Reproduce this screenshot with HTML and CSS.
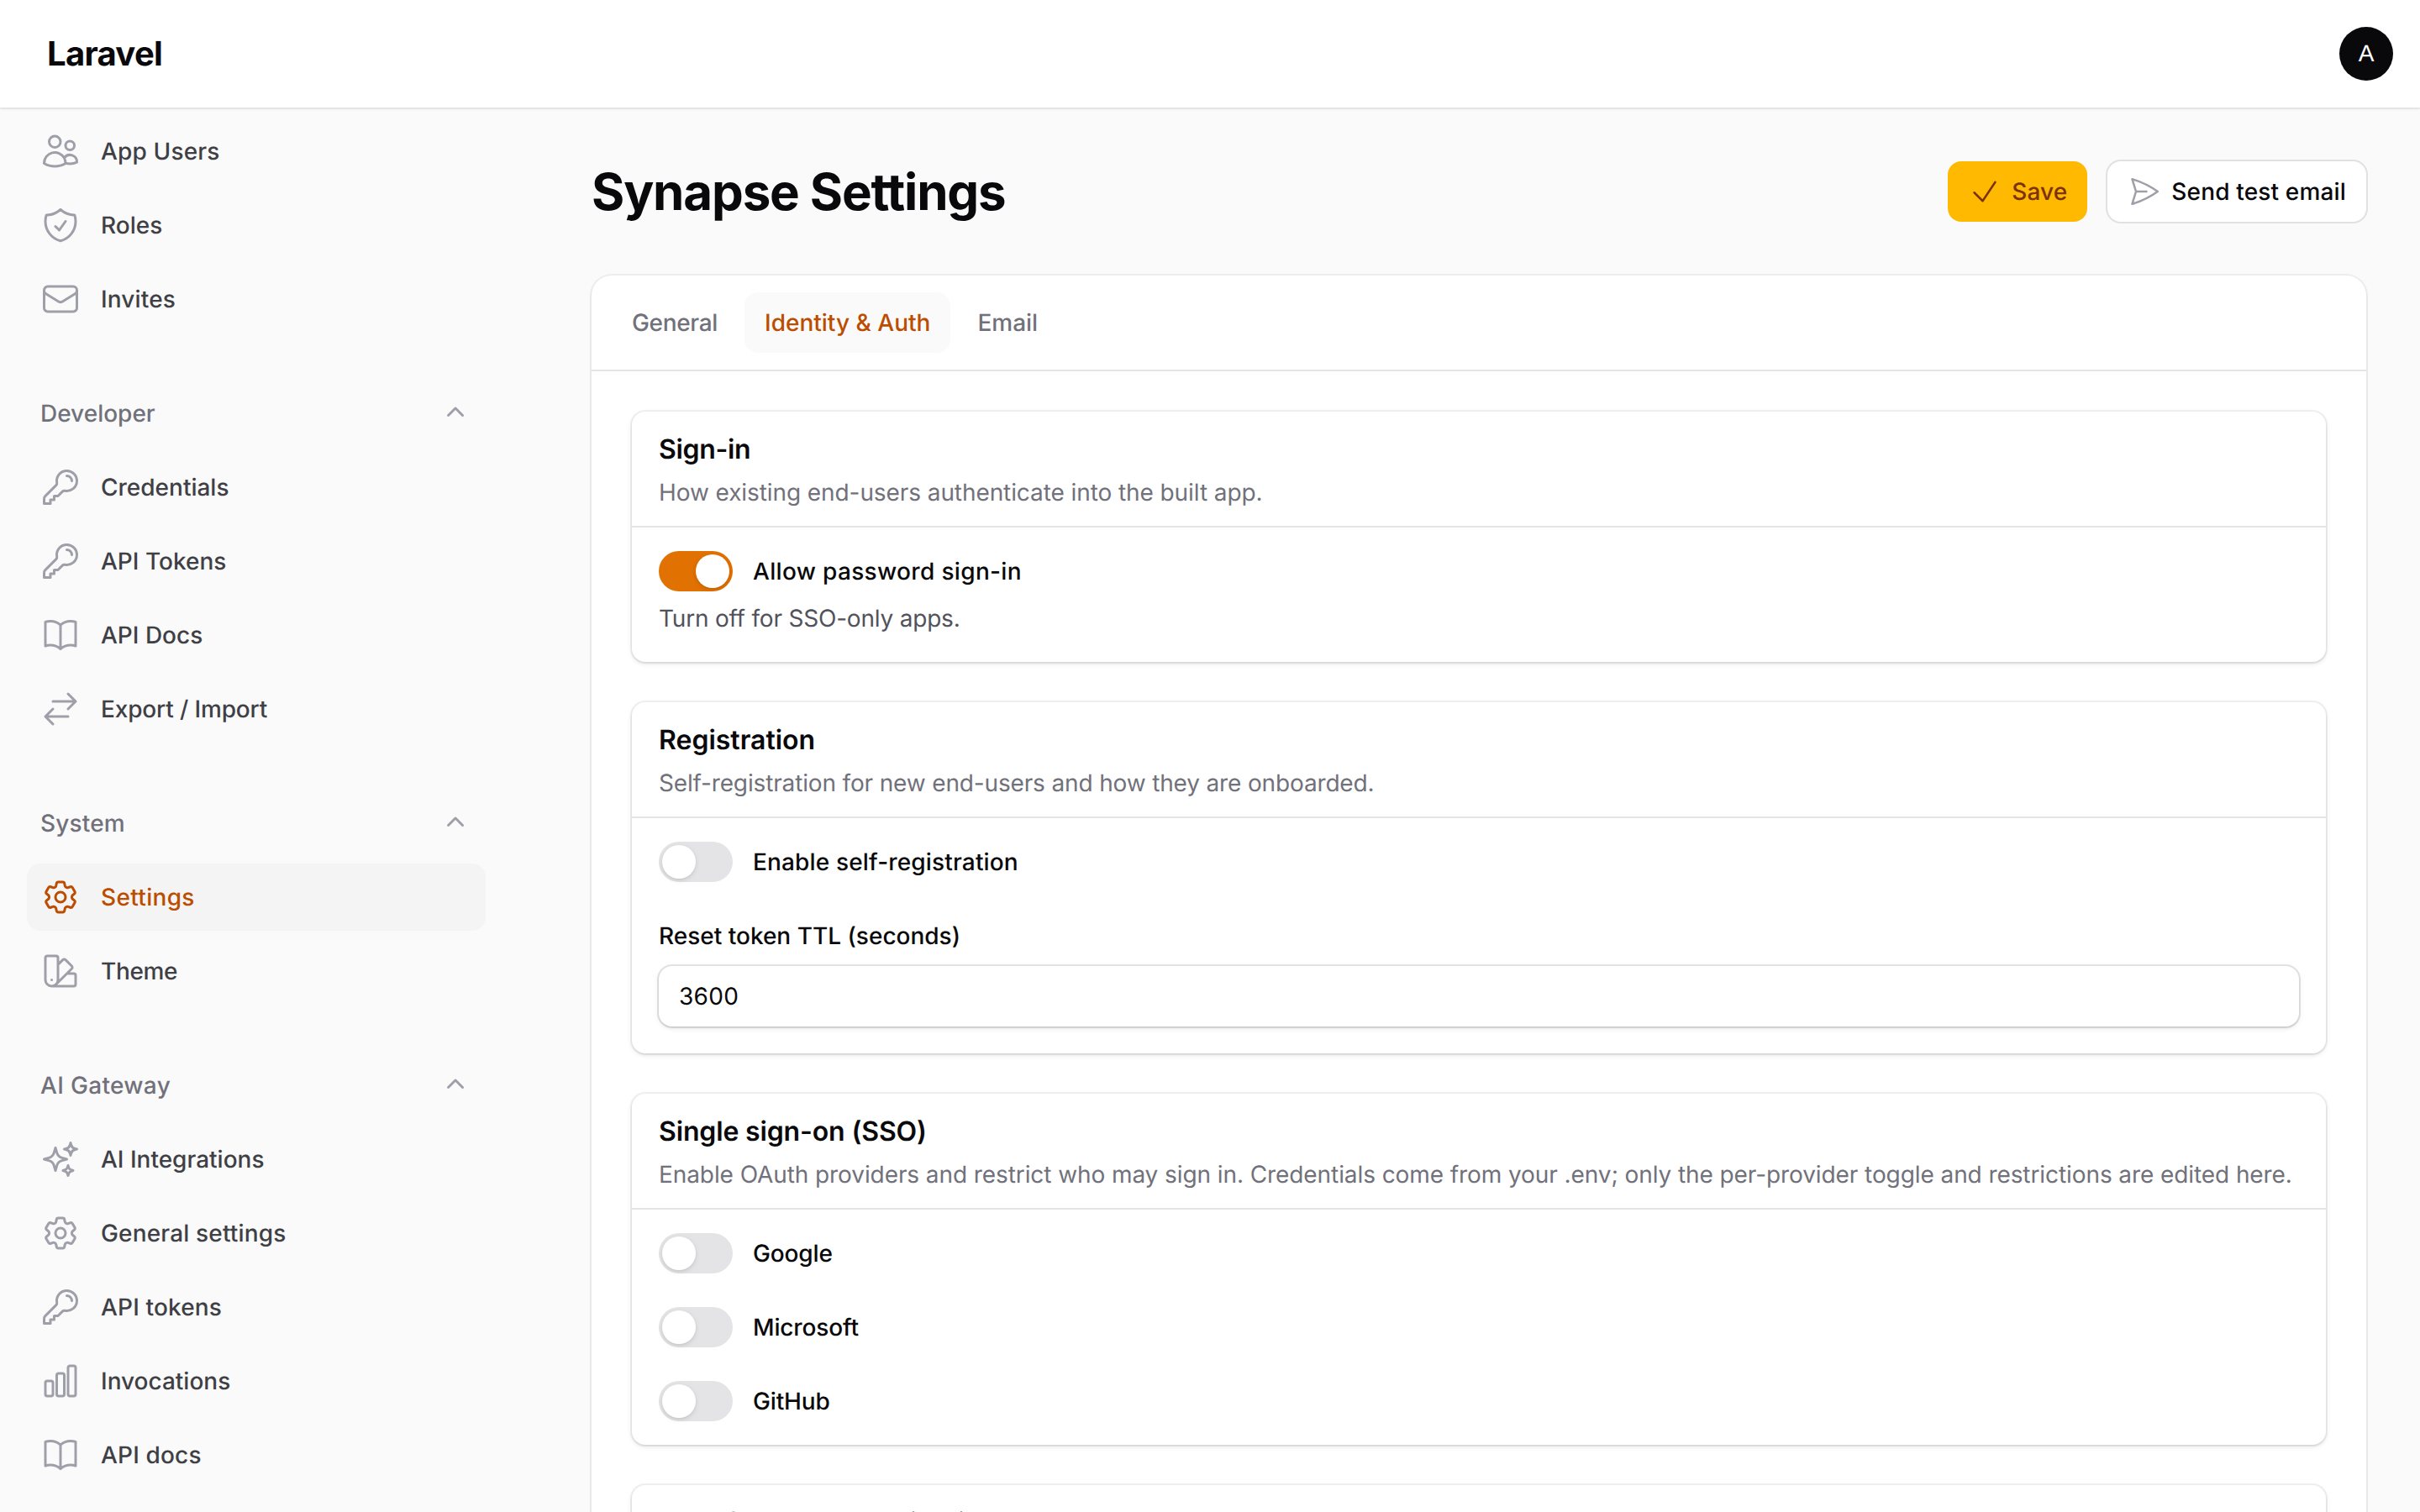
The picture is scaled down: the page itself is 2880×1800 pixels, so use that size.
FILE: index.html
```html
<!DOCTYPE html>
<html lang="en">
<head>
    <meta charset="UTF-8">
    <meta name="viewport" content="width=device-width, initial-scale=1.0">
    <title>Synapse Settings - Laravel</title>
    <link rel="stylesheet" href="styles.css">
</head>
<body>

    <!-- Icons used more than once -->
    <svg class="sprite" xmlns="http://www.w3.org/2000/svg">
        <symbol id="key" viewBox="0 0 24 24">
            <path d="M15.75 5.25a3 3 0 0 1 3 3m3 0a6 6 0 0 1-7.029 5.912c-.563-.097-1.159.026-1.563.43L10.5 17.25H8.25v2.25H6v2.25H2.25v-2.818c0-.597.237-1.17.659-1.591l6.499-6.499c.404-.404.527-1 .43-1.563A6 6 0 1 1 21.75 8.25Z"/>
        </symbol>
        <symbol id="book" viewBox="0 0 24 24">
            <path d="M12 6.042A8.967 8.967 0 0 0 6 3.75c-1.052 0-2.062.18-3 .512v14.25A8.987 8.987 0 0 1 6 18c2.305 0 4.408.867 6 2.292m0-14.25a8.966 8.966 0 0 1 6-2.292c1.052 0 2.062.18 3 .512v14.25A8.987 8.987 0 0 0 18 18a8.967 8.967 0 0 0-6 2.292m0-14.25v14.25"/>
        </symbol>
        <symbol id="cog" viewBox="0 0 24 24">
            <path d="M9.594 3.94c.09-.542.56-.94 1.11-.94h2.593c.55 0 1.02.398 1.11.94l.213 1.281c.063.374.313.686.645.87.074.04.147.083.22.127.325.196.72.257 1.075.124l1.217-.456a1.125 1.125 0 0 1 1.37.49l1.296 2.247a1.125 1.125 0 0 1-.26 1.431l-1.003.827c-.293.241-.438.613-.43.992a7.723 7.723 0 0 1 0 .255c-.008.378.137.75.43.991l1.004.827c.424.35.534.955.26 1.43l-1.298 2.247a1.125 1.125 0 0 1-1.369.491l-1.217-.456c-.355-.133-.75-.072-1.076.124a6.47 6.47 0 0 1-.22.128c-.331.183-.581.495-.644.869l-.213 1.281c-.09.543-.56.94-1.11.94h-2.594c-.55 0-1.019-.398-1.11-.94l-.213-1.281c-.062-.374-.312-.686-.644-.87a6.52 6.52 0 0 1-.22-.127c-.325-.196-.72-.257-1.076-.124l-1.217.456a1.125 1.125 0 0 1-1.369-.49l-1.297-2.247a1.125 1.125 0 0 1 .26-1.431l1.004-.827c.292-.24.437-.613.43-.991a6.932 6.932 0 0 1 0-.255c.007-.38-.138-.751-.43-.992l-1.004-.827a1.125 1.125 0 0 1-.26-1.43l1.297-2.247a1.125 1.125 0 0 1 1.37-.491l1.216.456c.356.133.751.072 1.076-.124.072-.044.146-.086.22-.128.332-.183.582-.495.644-.869l.214-1.28Z"/>
            <path d="M15 12a3 3 0 1 1-6 0 3 3 0 0 1 6 0Z"/>
        </symbol>
        <symbol id="chevron" viewBox="0 0 20 20">
            <path d="M9.47 6.47a.75.75 0 0 1 1.06 0l4.25 4.25a.75.75 0 1 1-1.06 1.06L10 8.06l-3.72 3.72a.75.75 0 0 1-1.06-1.06l4.25-4.25Z"/>
        </symbol>
    </svg>

    <header class="topbar">
        <div class="logo">Laravel</div>
        <div class="avatar">A</div>
    </header>

    <div class="layout">
        <nav class="sidebar">
            <section class="nav-group">
                <a class="nav-item loose-1">
                    <svg class="icon" viewBox="0 0 24 24"><path d="M15 19.128a9.38 9.38 0 0 0 2.625.372 9.337 9.337 0 0 0 4.121-.952 4.125 4.125 0 0 0-7.533-2.493M15 19.128v-.003c0-1.113-.285-2.16-.786-3.07M15 19.128v.106A12.318 12.318 0 0 1 8.624 21c-2.331 0-4.512-.645-6.374-1.766l-.001-.109a6.375 6.375 0 0 1 11.964-3.07M12 6.375a3.375 3.375 0 1 1-6.75 0 3.375 3.375 0 0 1 6.75 0Zm8.25 2.25a2.625 2.625 0 1 1-5.25 0 2.625 2.625 0 0 1 5.25 0Z"/></svg>
                    <span>App Users</span>
                </a>
                <a class="nav-item">
                    <svg class="icon" viewBox="0 0 24 24"><path d="M9 12.75 11.25 15 15 9.75m-3-7.036A11.959 11.959 0 0 1 3.598 6 11.99 11.99 0 0 0 3 9.749c0 5.592 3.824 10.29 9 11.623 5.176-1.332 9-6.03 9-11.622 0-1.31-.21-2.571-.598-3.751h-.152c-3.196 0-6.1-1.248-8.25-3.285Z"/></svg>
                    <span>Roles</span>
                </a>
                <a class="nav-item loose-1">
                    <svg class="icon" viewBox="0 0 24 24"><path d="M21.75 6.75v10.5a2.25 2.25 0 0 1-2.25 2.25h-15a2.25 2.25 0 0 1-2.25-2.25V6.75m19.5 0A2.25 2.25 0 0 0 19.5 4.5h-15a2.25 2.25 0 0 0-2.25 2.25m19.5 0v.243a2.25 2.25 0 0 1-1.07 1.916l-7.5 4.615a2.25 2.25 0 0 1-2.36 0L3.32 8.91a2.25 2.25 0 0 1-1.07-1.916V6.75"/></svg>
                    <span>Invites</span>
                </a>
            </section>

            <section class="nav-group">
                <div class="nav-label">
                    <span>Developer</span>
                    <svg class="chevron"><use href="#chevron"/></svg>
                </div>
                <a class="nav-item">
                    <svg class="icon"><use href="#key"/></svg>
                    <span>Credentials</span>
                </a>
                <a class="nav-item">
                    <svg class="icon"><use href="#key"/></svg>
                    <span>API Tokens</span>
                </a>
                <a class="nav-item">
                    <svg class="icon"><use href="#book"/></svg>
                    <span>API Docs</span>
                </a>
                <a class="nav-item tight-1">
                    <svg class="icon" viewBox="0 0 24 24"><path d="M7.5 21 3 16.5m0 0L7.5 12M3 16.5h13.5m0-13.5L21 7.5m0 0L16.5 12M21 7.5H7.5"/></svg>
                    <span>Export / Import</span>
                </a>
            </section>

            <section class="nav-group">
                <div class="nav-label loose-1">
                    <span>System</span>
                    <svg class="chevron"><use href="#chevron"/></svg>
                </div>
                <a class="nav-item active loose-2">
                    <svg class="icon"><use href="#cog"/></svg>
                    <span>Settings</span>
                </a>
                <a class="nav-item tight-2">
                    <svg class="icon" viewBox="0 0 24 24"><path d="M4.098 19.902a3.75 3.75 0 0 0 5.304 0l6.401-6.402M6.75 21A3.75 3.75 0 0 1 3 17.25V4.125C3 3.504 3.504 3 4.125 3h5.25c.621 0 1.125.504 1.125 1.125v4.072M6.75 21a3.75 3.75 0 0 0 3.75-3.75V8.197M6.75 21h13.125c.621 0 1.125-.504 1.125-1.125v-5.25c0-.621-.504-1.125-1.125-1.125h-4.072M10.5 8.197l2.88-2.88c.438-.439 1.15-.439 1.59 0l3.712 3.713c.44.44.44 1.152 0 1.59l-2.879 2.88M6.75 17.25h.008v.008H6.75v-.008Z"/></svg>
                    <span>Theme</span>
                </a>
            </section>

            <section class="nav-group">
                <div class="nav-label loose-2">
                    <span>AI Gateway</span>
                    <svg class="chevron"><use href="#chevron"/></svg>
                </div>
                <a class="nav-item">
                    <svg class="icon" viewBox="0 0 24 24"><path d="M9.813 15.904 9 18.75l-.813-2.846a4.5 4.5 0 0 0-3.09-3.09L2.25 12l2.846-.813a4.5 4.5 0 0 0 3.09-3.09L9 5.25l.813 2.846a4.5 4.5 0 0 0 3.09 3.09L15.75 12l-2.846.813a4.5 4.5 0 0 0-3.09 3.09ZM18.259 8.715 18 9.75l-.259-1.035a3.375 3.375 0 0 0-2.455-2.456L14.25 6l1.036-.259a3.375 3.375 0 0 0 2.455-2.456L18 2.25l.259 1.035a3.375 3.375 0 0 0 2.456 2.456L21.75 6l-1.035.259a3.375 3.375 0 0 0-2.456 2.456ZM16.894 20.567 16.5 21.75l-.394-1.183a2.25 2.25 0 0 0-1.423-1.423L13.5 18.75l1.183-.394a2.25 2.25 0 0 0 1.423-1.423l.394-1.183.394 1.183a2.25 2.25 0 0 0 1.423 1.423l1.183.394-1.183.394a2.25 2.25 0 0 0-1.423 1.423Z"/></svg>
                    <span>AI Integrations</span>
                </a>
                <a class="nav-item loose-1">
                    <svg class="icon"><use href="#cog"/></svg>
                    <span>General settings</span>
                </a>
                <a class="nav-item loose-1">
                    <svg class="icon"><use href="#key"/></svg>
                    <span>API tokens</span>
                </a>
                <a class="nav-item">
                    <svg class="icon" viewBox="0 0 24 24"><path d="M3 13.125C3 12.504 3.504 12 4.125 12h2.25c.621 0 1.125.504 1.125 1.125v6.75C7.5 20.496 6.996 21 6.375 21h-2.25A1.125 1.125 0 0 1 3 19.875v-6.75ZM9.75 8.625c0-.621.504-1.125 1.125-1.125h2.25c.621 0 1.125.504 1.125 1.125v11.25c0 .621-.504 1.125-1.125 1.125h-2.25a1.125 1.125 0 0 1-1.125-1.125V8.625ZM16.5 4.125c0-.621.504-1.125 1.125-1.125h2.25C20.496 3 21 3.504 21 4.125v15.75c0 .621-.504 1.125-1.125 1.125h-2.25a1.125 1.125 0 0 1-1.125-1.125V4.125Z"/></svg>
                    <span>Invocations</span>
                </a>
                <a class="nav-item loose-1">
                    <svg class="icon"><use href="#book"/></svg>
                    <span>API docs</span>
                </a>
            </section>
        </nav>

        <main class="main">
            <div class="page-header">
                <h1>Synapse Settings</h1>
                <div class="actions">
                    <button class="btn btn-primary loose-1">
                        <svg class="icon" viewBox="0 0 24 24"><path d="m4.5 12.75 6 6 9-13.5"/></svg>
                        Save
                    </button>
                    <button class="btn btn-outline loose-1">
                        <svg class="icon" viewBox="0 0 24 24"><path d="M6 12 3.269 3.125A59.769 59.769 0 0 1 21.485 12 59.768 59.768 0 0 1 3.27 20.875L5.999 12Zm0 0h7.5"/></svg>
                        Send test email
                    </button>
                </div>
            </div>

            <div class="card">
                <div class="tabs">
                    <button class="tab tight-2">General</button>
                    <button class="tab active">Identity &amp; Auth</button>
                    <button class="tab">Email</button>
                </div>

                <div class="tab-panel">
                    <section class="section">
                        <div class="section-header">
                            <h2 class="tight-2">Sign-in</h2>
                            <p>How existing end-users authenticate into the built app.</p>
                        </div>
                        <div class="section-content">
                            <div class="field">
                                <div class="toggle-row">
                                    <span class="toggle on"></span>
                                    <span class="label loose-2">Allow password sign-in</span>
                                </div>
                                <p class="hint">Turn off for SSO-only apps.</p>
                            </div>
                        </div>
                    </section>

                    <section class="section">
                        <div class="section-header">
                            <h2>Registration</h2>
                            <p class="tight-1">Self-registration for new end-users and how they are onboarded.</p>
                        </div>
                        <div class="section-content">
                            <div class="toggle-row">
                                <span class="toggle"></span>
                                <span class="label loose-1">Enable self-registration</span>
                            </div>
                            <div class="field">
                                <label class="label" for="ttl">Reset token TTL (seconds)</label>
                                <input class="input loose-2" id="ttl" type="text" value="3600">
                            </div>
                        </div>
                    </section>

                    <section class="section">
                        <div class="section-header">
                            <h2 class="tight-1">Single sign-on (SSO)</h2>
                            <p>Enable OAuth providers and restrict who may sign in. Credentials come from your .env; only the per-provider toggle and restrictions are edited here.</p>
                        </div>
                        <div class="section-content">
                            <div class="toggle-row">
                                <span class="toggle"></span>
                                <span class="label tight-1">Google</span>
                            </div>
                            <div class="toggle-row">
                                <span class="toggle"></span>
                                <span class="label tight-1">Microsoft</span>
                            </div>
                            <div class="toggle-row">
                                <span class="toggle"></span>
                                <span class="label tight-1">GitHub</span>
                            </div>
                        </div>
                    </section>

                    <section class="section">
                        <div class="section-header">
                            <h2>Two-factor authentication</h2>
                        </div>
                    </section>
                </div>
            </div>
        </main>
    </div>

</body>
</html>
```

FILE: styles.css
```css
* {
    box-sizing: border-box;
}

body {
    margin: 0;
    height: 100vh;
    overflow: hidden;
    display: flex;
    flex-direction: column;
    background: #fafafa;
    color: #09090b;
    font-family: Inter, "Liberation Sans", sans-serif;
    font-size: 28px;
    line-height: 40px;
    text-rendering: geometricPrecision;
}

h1,
h2,
p {
    margin: 0;
}

button,
input {
    font: inherit;
    border: none;
    text-rendering: inherit;
}

.sprite {
    display: none;
}

.icon {
    width: 48px;
    height: 48px;
    flex: none;
    fill: none;
    stroke: #9f9fa9;
    stroke-width: 1.5;
    stroke-linecap: round;
    stroke-linejoin: round;
}

/* Top bar */
.topbar {
    height: 128px;
    flex: none;
    display: flex;
    align-items: center;
    justify-content: space-between;
    padding: 0 32px 0 56px;
    background: #fff;
    box-shadow: 0 0 0 2px rgba(9, 9, 11, 0.05), 0 2px 6px rgba(0, 0, 0, 0.1), 0 2px 4px -2px rgba(0, 0, 0, 0.1);
    box-shadow: 0 0 0 2px rgba(9, 9, 11, 0.05), 0 2px 4px rgba(0, 0, 0, 0.05);
    z-index: 1;
}

.logo {
    font-size: 40px;
    font-weight: 700;
    letter-spacing: -0.7px;
}

.avatar {
    width: 64px;
    height: 64px;
    border-radius: 50%;
    background: #09090b;
    color: #fff;
    font-family: "Liberation Sans", sans-serif;
    font-size: 28px;
    line-height: 64px;
    text-align: center;
}

.layout {
    flex: 1;
    min-height: 0;
    display: flex;
}

/* Sidebar */
.sidebar {
    width: 640px;
    flex: none;
    padding: 12px 62px 0 32px;
    display: flex;
    flex-direction: column;
    gap: 56px;
}

.nav-group {
    display: flex;
    flex-direction: column;
    gap: 8px;
}

.nav-label,
.nav-item {
    height: 80px;
    padding: 0 16px;
    display: flex;
    align-items: center;
    font-weight: 500;
}

.nav-label {
    justify-content: space-between;
    color: #71717b;
}

.nav-item {
    gap: 24px;
    border-radius: 16px;
    color: #3f3f46;
}

.nav-item.active {
    background: #f4f4f5;
    color: #bb4d00;
}

.nav-item.active .icon {
    stroke: #bb4d00;
}

.chevron {
    width: 40px;
    height: 40px;
    fill: #9f9fa9;
}

/* Page */
.main {
    flex: 1;
    min-width: 0;
    padding: 64px;
}

.page-header {
    display: flex;
    align-items: center;
    justify-content: space-between;
    margin-bottom: 64px;
}

h1 {
    font-size: 60px;
    line-height: 72px;
    font-weight: 700;
    letter-spacing: -1.15px;
    text-rendering: auto;
}

.actions {
    display: flex;
    gap: 24px;
}

.btn {
    height: 72px;
    padding: 0 24px;
    display: flex;
    align-items: center;
    gap: 12px;
    border-radius: 16px;
    font-weight: 500;
}

.btn .icon {
    width: 40px;
    height: 40px;
}

.btn-primary {
    background: #ffb900;
    color: #7b3306;
}

.btn-primary .icon {
    stroke: #7b3306;
}

.btn-outline {
    background: #fff;
    color: #09090b;
    box-shadow: 0 0 0 2px rgba(9, 9, 11, 0.1);
}

.card {
    border-radius: 24px;
    background: #fff;
    box-shadow: 0 0 0 2px rgba(9, 9, 11, 0.05), 0 2px 4px rgba(0, 0, 0, 0.05);
}

.tabs {
    display: flex;
    gap: 8px;
    padding: 20px 24px;
    border-bottom: 2px solid #e4e4e7;
}

.tab {
    height: 72px;
    padding: 0 24px;
    border-radius: 16px;
    background: none;
    color: #71717b;
    font-weight: 500;
}

.tab.active {
    background: #fafafa;
    color: #bb4d00;
}

.tab-panel {
    display: flex;
    flex-direction: column;
    gap: 48px;
    padding: 48px;
}

/* Sections */
.section {
    border-radius: 16px;
    background: #fff;
    box-shadow: 0 0 0 2px rgba(9, 9, 11, 0.05), 0 2px 6px rgba(0, 0, 0, 0.1), 0 2px 4px -2px rgba(0, 0, 0, 0.1);
}

.section-header {
    display: flex;
    flex-direction: column;
    gap: 7px;
    padding: 20px 32px;
}

.section-header h2 {
    font-size: 32px;
    line-height: 49px;
    font-weight: 600;
}

.section-header p {
    color: #71717b;
    letter-spacing: -0.085px;
}

.section-content {
    display: flex;
    flex-direction: column;
    gap: 48px;
    padding: 32px;
    border-top: 2px solid #e4e4e7;
}

.field {
    display: flex;
    flex-direction: column;
    gap: 16px;
}

.label {
    font-weight: 500;
}

.hint {
    color: #52525c;
    letter-spacing: -0.2px;
}

.toggle-row {
    height: 40px;
    display: flex;
    align-items: center;
    gap: 24px;
}

.toggle {
    width: 88px;
    height: 48px;
    flex: none;
    display: flex;
    padding: 4px;
    border-radius: 24px;
    background: #e4e4e7;
}

.toggle::before {
    content: '';
    width: 40px;
    height: 40px;
    border-radius: 50%;
    background: #fff;
    box-shadow: 0 2px 6px rgba(0, 0, 0, 0.1), 0 2px 4px -2px rgba(0, 0, 0, 0.1);
}

.toggle.on {
    justify-content: flex-end;
    background: #e17100;
}

.input {
    height: 72px;
    width: 100%;
    padding: 0 24px;
    border-radius: 16px;
    background: #fff;
    color: #09090b;
    outline: none;
    box-shadow: 0 0 0 2px rgba(9, 9, 11, 0.1), 0 2px 6px rgba(0, 0, 0, 0.1), 0 2px 4px -2px rgba(0, 0, 0, 0.1);
}

/* Tracking */
.tight-1,
.section-header p.tight-1 {
    letter-spacing: -0.15px;
}

.tight-2 {
    letter-spacing: -0.33px;
}

.loose-1 {
    letter-spacing: 0.16px;
}

.loose-2 {
    letter-spacing: 0.33px;
}
```
